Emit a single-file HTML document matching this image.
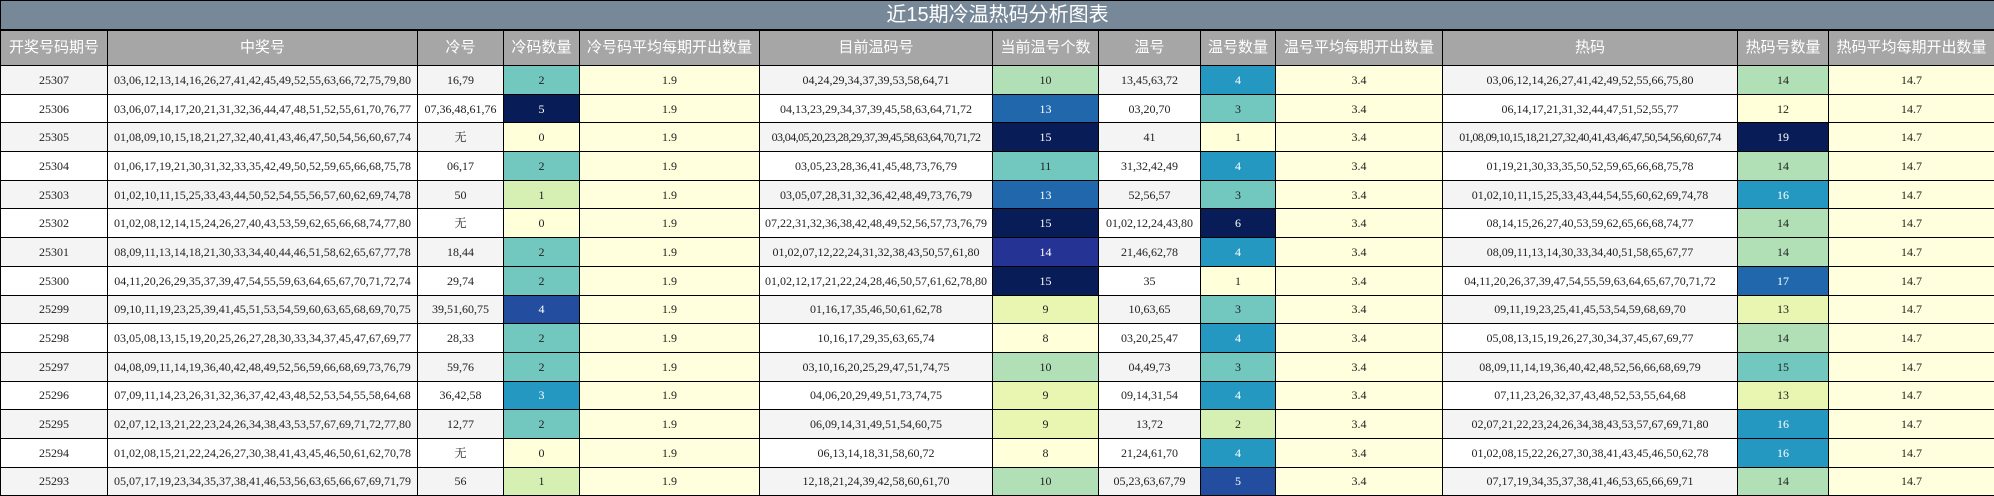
<!DOCTYPE html><html><head><meta charset="utf-8"><style>
body{margin:0;width:1994px;height:496px;overflow:hidden;background:#fff}
table{border-collapse:collapse;table-layout:fixed;width:1994px;font-family:"Liberation Serif","Noto Serif CJK SC",serif;font-size:12px}
td,th{border:1px solid #000;text-align:center;padding:0;white-space:nowrap;overflow:hidden;color:#222;line-height:14px}
tr.tt{height:29px}
.t{background:#778899;color:#fff;font-family:"Liberation Sans","Noto Sans CJK SC",sans-serif;font-size:20px;font-weight:normal;line-height:22px;border-bottom:2px solid #000}
tr.h{height:36px}
.h th{background:#a6a6a6;color:#fff;font-family:"Liberation Sans","Noto Sans CJK SC",sans-serif;font-size:15px;font-weight:normal;line-height:18px}
tr.r{height:28.7px}
.s{letter-spacing:-0.6px}
tr.r:nth-child(odd) td{background:#f4f4f4}
tr.r:nth-child(even) td{background:#fff}
tr.r td.y{background:#ffffdd}
tr.r td.c0{background:#ffffd9}tr.r td.c1{background:#d6efb3}tr.r td.cg{background:#e9f6b1}tr.r td.cm{background:#b1e0b6}
tr.r td.ct{background:#72c7be}tr.r td.cb{background:#2498c1;color:#fff}tr.r td.cB{background:#2167ac;color:#fff}
tr.r td.cn{background:#234ea0;color:#fff}tr.r td.cP{background:#253494;color:#fff}tr.r td.cd{background:#081d58;color:#fff}
</style></head><body><table>
<colgroup><col style="width:107px"><col style="width:310px"><col style="width:86px"><col style="width:76px"><col style="width:180px"><col style="width:233px"><col style="width:106px"><col style="width:102px"><col style="width:75px"><col style="width:167px"><col style="width:295px"><col style="width:91px"><col style="width:166px"></colgroup>
<tr class="tt"><th class="t" colspan="13">近15期冷温热码分析图表</th></tr>
<tr class="h"><th>开奖号码期号</th><th>中奖号</th><th>冷号</th><th>冷码数量</th><th>冷号码平均每期开出数量</th><th>目前温码号</th><th>当前温号个数</th><th>温号</th><th>温号数量</th><th>温号平均每期开出数量</th><th>热码</th><th>热码号数量</th><th>热码平均每期开出数量</th></tr>
<tr class="r"><td>25307</td><td>03,06,12,13,14,16,26,27,41,42,45,49,52,55,63,66,72,75,79,80</td><td>16,79</td><td class="ct">2</td><td class="y">1.9</td><td>04,24,29,34,37,39,53,58,64,71</td><td class="cm">10</td><td>13,45,63,72</td><td class="cb">4</td><td class="y">3.4</td><td>03,06,12,14,26,27,41,42,49,52,55,66,75,80</td><td class="cm">14</td><td class="y">14.7</td></tr>
<tr class="r"><td>25306</td><td>03,06,07,14,17,20,21,31,32,36,44,47,48,51,52,55,61,70,76,77</td><td>07,36,48,61,76</td><td class="cd">5</td><td class="y">1.9</td><td>04,13,23,29,34,37,39,45,58,63,64,71,72</td><td class="cB">13</td><td>03,20,70</td><td class="ct">3</td><td class="y">3.4</td><td>06,14,17,21,31,32,44,47,51,52,55,77</td><td class="c0">12</td><td class="y">14.7</td></tr>
<tr class="r"><td>25305</td><td>01,08,09,10,15,18,21,27,32,40,41,43,46,47,50,54,56,60,67,74</td><td>无</td><td class="c0">0</td><td class="y">1.9</td><td class="s">03,04,05,20,23,28,29,37,39,45,58,63,64,70,71,72</td><td class="cd">15</td><td>41</td><td class="c0">1</td><td class="y">3.4</td><td class="s">01,08,09,10,15,18,21,27,32,40,41,43,46,47,50,54,56,60,67,74</td><td class="cd">19</td><td class="y">14.7</td></tr>
<tr class="r"><td>25304</td><td>01,06,17,19,21,30,31,32,33,35,42,49,50,52,59,65,66,68,75,78</td><td>06,17</td><td class="ct">2</td><td class="y">1.9</td><td>03,05,23,28,36,41,45,48,73,76,79</td><td class="ct">11</td><td>31,32,42,49</td><td class="cb">4</td><td class="y">3.4</td><td>01,19,21,30,33,35,50,52,59,65,66,68,75,78</td><td class="cm">14</td><td class="y">14.7</td></tr>
<tr class="r"><td>25303</td><td>01,02,10,11,15,25,33,43,44,50,52,54,55,56,57,60,62,69,74,78</td><td>50</td><td class="c1">1</td><td class="y">1.9</td><td>03,05,07,28,31,32,36,42,48,49,73,76,79</td><td class="cB">13</td><td>52,56,57</td><td class="ct">3</td><td class="y">3.4</td><td>01,02,10,11,15,25,33,43,44,54,55,60,62,69,74,78</td><td class="cb">16</td><td class="y">14.7</td></tr>
<tr class="r"><td>25302</td><td>01,02,08,12,14,15,24,26,27,40,43,53,59,62,65,66,68,74,77,80</td><td>无</td><td class="c0">0</td><td class="y">1.9</td><td>07,22,31,32,36,38,42,48,49,52,56,57,73,76,79</td><td class="cd">15</td><td>01,02,12,24,43,80</td><td class="cd">6</td><td class="y">3.4</td><td>08,14,15,26,27,40,53,59,62,65,66,68,74,77</td><td class="cm">14</td><td class="y">14.7</td></tr>
<tr class="r"><td>25301</td><td>08,09,11,13,14,18,21,30,33,34,40,44,46,51,58,62,65,67,77,78</td><td>18,44</td><td class="ct">2</td><td class="y">1.9</td><td>01,02,07,12,22,24,31,32,38,43,50,57,61,80</td><td class="cP">14</td><td>21,46,62,78</td><td class="cb">4</td><td class="y">3.4</td><td>08,09,11,13,14,30,33,34,40,51,58,65,67,77</td><td class="cm">14</td><td class="y">14.7</td></tr>
<tr class="r"><td>25300</td><td>04,11,20,26,29,35,37,39,47,54,55,59,63,64,65,67,70,71,72,74</td><td>29,74</td><td class="ct">2</td><td class="y">1.9</td><td>01,02,12,17,21,22,24,28,46,50,57,61,62,78,80</td><td class="cd">15</td><td>35</td><td class="c0">1</td><td class="y">3.4</td><td>04,11,20,26,37,39,47,54,55,59,63,64,65,67,70,71,72</td><td class="cB">17</td><td class="y">14.7</td></tr>
<tr class="r"><td>25299</td><td>09,10,11,19,23,25,39,41,45,51,53,54,59,60,63,65,68,69,70,75</td><td>39,51,60,75</td><td class="cn">4</td><td class="y">1.9</td><td>01,16,17,35,46,50,61,62,78</td><td class="cg">9</td><td>10,63,65</td><td class="ct">3</td><td class="y">3.4</td><td>09,11,19,23,25,41,45,53,54,59,68,69,70</td><td class="cg">13</td><td class="y">14.7</td></tr>
<tr class="r"><td>25298</td><td>03,05,08,13,15,19,20,25,26,27,28,30,33,34,37,45,47,67,69,77</td><td>28,33</td><td class="ct">2</td><td class="y">1.9</td><td>10,16,17,29,35,63,65,74</td><td class="c0">8</td><td>03,20,25,47</td><td class="cb">4</td><td class="y">3.4</td><td>05,08,13,15,19,26,27,30,34,37,45,67,69,77</td><td class="cm">14</td><td class="y">14.7</td></tr>
<tr class="r"><td>25297</td><td>04,08,09,11,14,19,36,40,42,48,49,52,56,59,66,68,69,73,76,79</td><td>59,76</td><td class="ct">2</td><td class="y">1.9</td><td>03,10,16,20,25,29,47,51,74,75</td><td class="cm">10</td><td>04,49,73</td><td class="ct">3</td><td class="y">3.4</td><td>08,09,11,14,19,36,40,42,48,52,56,66,68,69,79</td><td class="ct">15</td><td class="y">14.7</td></tr>
<tr class="r"><td>25296</td><td>07,09,11,14,23,26,31,32,36,37,42,43,48,52,53,54,55,58,64,68</td><td>36,42,58</td><td class="cb">3</td><td class="y">1.9</td><td>04,06,20,29,49,51,73,74,75</td><td class="cg">9</td><td>09,14,31,54</td><td class="cb">4</td><td class="y">3.4</td><td>07,11,23,26,32,37,43,48,52,53,55,64,68</td><td class="cg">13</td><td class="y">14.7</td></tr>
<tr class="r"><td>25295</td><td>02,07,12,13,21,22,23,24,26,34,38,43,53,57,67,69,71,72,77,80</td><td>12,77</td><td class="ct">2</td><td class="y">1.9</td><td>06,09,14,31,49,51,54,60,75</td><td class="cg">9</td><td>13,72</td><td class="c1">2</td><td class="y">3.4</td><td>02,07,21,22,23,24,26,34,38,43,53,57,67,69,71,80</td><td class="cb">16</td><td class="y">14.7</td></tr>
<tr class="r"><td>25294</td><td>01,02,08,15,21,22,24,26,27,30,38,41,43,45,46,50,61,62,70,78</td><td>无</td><td class="c0">0</td><td class="y">1.9</td><td>06,13,14,18,31,58,60,72</td><td class="c0">8</td><td>21,24,61,70</td><td class="cb">4</td><td class="y">3.4</td><td>01,02,08,15,22,26,27,30,38,41,43,45,46,50,62,78</td><td class="cb">16</td><td class="y">14.7</td></tr>
<tr class="r"><td>25293</td><td>05,07,17,19,23,34,35,37,38,41,46,53,56,63,65,66,67,69,71,79</td><td>56</td><td class="c1">1</td><td class="y">1.9</td><td>12,18,21,24,39,42,58,60,61,70</td><td class="cm">10</td><td>05,23,63,67,79</td><td class="cn">5</td><td class="y">3.4</td><td>07,17,19,34,35,37,38,41,46,53,65,66,69,71</td><td class="cm">14</td><td class="y">14.7</td></tr>
</table></body></html>
